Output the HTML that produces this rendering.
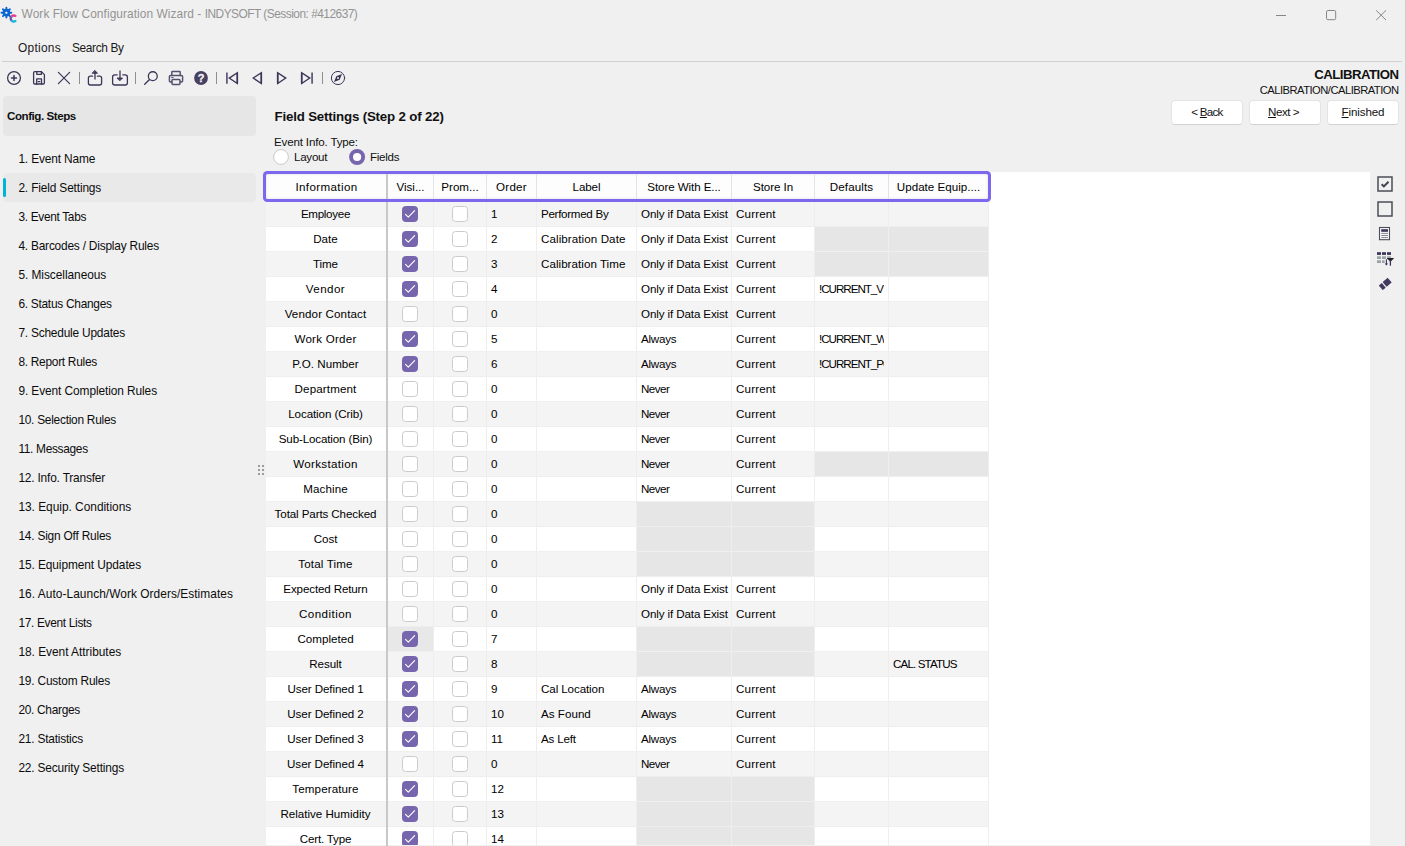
<!DOCTYPE html>
<html lang="en"><head><meta charset="utf-8"><title>Work Flow Configuration Wizard</title>
<style>
*{box-sizing:border-box;margin:0;padding:0}
html,body{width:1406px;height:846px;overflow:hidden;background:#f0f0f0}
body{position:relative;font-family:"Liberation Sans",sans-serif;font-size:11.6px;color:#111;}
div,span{position:absolute;white-space:nowrap}
.title{left:21.6px;top:6px;font-size:11.9px;color:#939393;line-height:16px;white-space:pre}
.ts{position:static;white-space:pre}
.menu{top:40px;font-size:11.9px;line-height:16px;color:#1a1a1a}
.sep{left:2px;top:61px;width:1400px;height:1px;background:#d0d0d0}
.redge{left:1405px;top:0;width:1px;height:846px;background:#cdcdcd}
.tsep{top:72px;width:1px;height:12px;background:#8f8f8f}
.cfg{left:3px;top:96px;width:253px;height:40px;background:#e6e6e6;border-radius:4px;font-weight:bold;font-size:11.6px;line-height:39px;padding-left:4px;color:#111;letter-spacing:-0.45px}
.sel{left:3px;top:173px;width:253px;height:29px;background:#e9e9e9;border-radius:4px}
.selbar{left:3px;top:178px;width:3px;height:19px;background:#00b4d8;border-radius:2px}
.step{left:18.4px;font-size:11.9px;line-height:20px;height:20px;color:#0c0c0c}
.ttl{left:274.5px;top:108px;font-weight:bold;font-size:13.3px;line-height:18px;letter-spacing:-0.18px}
.eit{left:274px;top:134px;font-size:11.6px;line-height:16px;letter-spacing:-0.17px}
.rl{top:149px;font-size:11.6px;line-height:16px;letter-spacing:-0.27px}
.panel{left:266px;top:172px;width:1104px;height:673px;background:#fff}
.row{left:266px;width:723px;height:25px;background:#fff;border-bottom:1px solid #f0f0f0}
.row.odd{background:#f4f4f4;border-bottom-color:#eee}
.c{top:-1px;height:25px;line-height:25px;font-size:11.6px;color:#000}
.info{left:0;width:119px;text-align:center}
.ord{left:225px}
.lab{left:275px}
.sw{left:375px}
.si{left:470px}
.df{left:553px;width:65px;overflow:hidden}
.up{left:627px}
.g{top:0;height:24px;background:#e6e6e6}
.cb{top:4px;width:16px;height:16px;border:1px solid #cbcbcb;border-radius:3.5px;background:#fff}
.cb.on{background:#7765ad;border-color:#7765ad}
.cb svg{position:absolute;left:-1px;top:-1px;width:16px;height:16px}
.focus{left:122px;top:0;width:45px;height:24px;background:#e8e8e8}
.vl{top:202px;width:1px;height:644px;background:#eeeeee}
.botline{left:266px;top:845px;width:1104px;height:1px;background:#f0f0f0}
.fz{left:386px;top:202px;width:2px;height:644px;background:#c8c8c8}
.hfz{left:120px;top:0;width:2px;height:25px;background:#c8c8c8}
.hdr{left:266px;top:174px;width:722px;height:25px;box-shadow:0 0 0 3px #7b68ee,inset 0 0 3px rgba(0,0,0,.13);border-radius:1.5px;background:#fdfdfd}
.h{top:0px;height:25px;line-height:25px;text-align:center;font-size:11.6px;color:#000}
.hl{top:0;width:1px;height:25px;background:#e4e4e4}
.btn{top:100px;height:24.5px;width:72px;background:#fff;border:1px solid #e4e4e4;border-bottom-color:#d2d2d2;border-radius:4px;text-align:center;line-height:21px;font-size:11.6px;color:#111}
.cal1{right:7.5px;top:67px;font-weight:bold;font-size:13.2px;line-height:16px;letter-spacing:-0.5px}
.cal2{right:7.5px;top:81.5px;font-size:11.2px;line-height:16px;letter-spacing:-0.52px}
u{text-decoration-thickness:1px;text-underline-offset:1px}
svg{position:absolute;overflow:visible}
</style></head>
<body>
<svg style="left:0;top:0" width="20" height="26" viewBox="0 0 20 26"><path d="M8.40 12.70L11.30 12.70M7.81 14.11L9.86 16.16M6.40 14.70L6.40 17.60M4.99 14.11L2.94 16.16M4.40 12.70L1.50 12.70M4.99 11.29L2.94 9.24M6.40 10.70L6.40 7.80M7.81 11.29L9.86 9.24" stroke="#0b66d2" stroke-width="1.9" stroke-linecap="round" fill="none"/><circle cx="6.4" cy="12.7" r="2.75" fill="none" stroke="#0b66d2" stroke-width="2.2"/><path d="M16.06 16.65A3 3 0 0 0 11.58 16.38" fill="none" stroke="#e2408f" stroke-width="2.3"/><path d="M11.58 16.38A3 3 0 0 0 11.58 20.62" fill="none" stroke="#6b4fa8" stroke-width="2.3"/><path d="M11.58 20.62A3 3 0 0 0 16.06 20.35" fill="none" stroke="#12b9dd" stroke-width="2.3"/></svg>
<div class="title"><span class="ts" style="letter-spacing:0.07px">Work Flow Configuration Wizard - </span><span class="ts" style="letter-spacing:-0.51px">INDYSOFT (Session: #412637)</span></div>
<svg style="left:1270px;top:4px" width="130" height="22" viewBox="0 0 130 22" fill="none" stroke="#868686" stroke-width="1"><path d="M6 11.5h10"/><rect x="56.5" y="6.5" width="9.2" height="9.2" rx="1.4"/><path d="M106.2 6.3l9.8 9.8M116 6.3l-9.8 9.8"/></svg>
<div class="menu" style="left:18px;letter-spacing:0.286px">Options</div><div class="menu" style="left:72px;letter-spacing:-0.37px">Search By</div>
<div class="sep"></div><div class="redge"></div>
<svg style="left:0;top:64px" width="360" height="28" viewBox="0 64 360 28" fill="none" stroke="#3d3557" stroke-width="1.3" stroke-linecap="round" stroke-linejoin="round">
<circle cx="14" cy="78" r="6.4"/><path d="M14 75.5v5M11.5 78h5" stroke-width="1.5"/>
<path d="M33.6 72.8a1.2 1.2 0 0 1 1.2-1.2h6.6l3 3v8.2a1.2 1.2 0 0 1-1.2 1.2h-8.4a1.2 1.2 0 0 1-1.2-1.2z"/><path d="M36.8 71.8v2.5h4.6v-2.5M36.7 84v-5.1h4.8V84"/><path d="M38.2 81.6h1.6" stroke-width="1.2"/>
<path d="M58.4 72.4l11.2 11.2M69.6 72.4L58.4 83.6" stroke-width="1.2"/>
<path d="M92.6 76.2h-2.2a2 2 0 0 0-2 2v4.8a2 2 0 0 0 2 2h9.2a2 2 0 0 0 2-2v-4.8a2 2 0 0 0-2-2h-2.2"/><path d="M95 79.4v-6.6" stroke-linecap="butt"/><path d="M95 70.6l2.5 2.7h-5z" fill="#3d3557" stroke-width=".9"/>
<path d="M117.2 74.8h-2.4a2.2 2.2 0 0 0-2.2 2.2v5.8a2.2 2.2 0 0 0 2.2 2.2h10.4a2.2 2.2 0 0 0 2.2-2.2v-5.8a2.2 2.2 0 0 0-2.2-2.2h-2.4"/><path d="M120 70.4v8" stroke-linecap="butt"/><path d="M120 80.6l2.6-2.6h-5.2z" fill="#3d3557" stroke-width=".9"/>
<circle cx="152.8" cy="76.2" r="4.45"/><path d="M149.2 79.8l-4.5 4.5" stroke-width="1.35"/>
<g stroke="#564e6f" stroke-width="1.45"><path d="M171.8 75.4v-3.2a.8.8 0 0 1 .8-.8h6.8a.8.8 0 0 1 .8.8v3.2"/><path d="M171.8 82h-1.2a1.2 1.2 0 0 1-1.2-1.2v-4.2a1.2 1.2 0 0 1 1.2-1.2h10.8a1.2 1.2 0 0 1 1.2 1.2v4.2a1.2 1.2 0 0 1-1.2 1.2h-1.2"/><rect x="172" y="79.4" width="8" height="5" rx=".8"/><path d="M171.6 77.6h1.6" stroke-width="1"/></g>
<circle cx="201" cy="78" r="6.9" fill="#484060" stroke="none"/>
<path d="M226.9 72.4v11.4M237.2 72.9v10.4M261.2 72.9v10.4M277.8 72.9v10.4M301.8 72.9v10.4M312.1 72.4v11.4" stroke="#635c7d" stroke-width="1.8" stroke-linecap="butt"/><path d="M237.4 72.6v11L229.2 78.1z" stroke-linejoin="miter"/>
<path d="M261.4 72.6v11L253.2 78.1z" stroke-linejoin="miter"/>
<path d="M277.6 72.6v11L285.8 78.1z" stroke-linejoin="miter"/>
<path d="M301.6 72.6v11L309.8 78.1z" stroke-linejoin="miter"/>
<circle cx="338" cy="78" r="6.6" stroke-width="1"/><path d="M342 74l-2.3 5.7-5.7 2.3 2.3-5.7z" fill="#3d3557" stroke="none"/><circle cx="338" cy="78" r="1" fill="#f0f0f0" stroke="none"/>
<text x="201" y="81.8" text-anchor="middle" font-family="Liberation Sans, sans-serif" font-weight="bold" font-size="11" fill="#f4f4f4" stroke="#f4f4f4" stroke-width=".3">?</text>
</svg>
<div class="tsep" style="left:79px"></div><div class="tsep" style="left:135px"></div><div class="tsep" style="left:216px"></div><div class="tsep" style="left:322px"></div>
<div class="cal1">CALIBRATION</div><div class="cal2">CALIBRATION/CALIBRATION</div>
<div class="btn" style="left:1171px;letter-spacing:-0.75px">&lt; <u>B</u>ack</div><div class="btn" style="left:1249px;letter-spacing:-0.5px;padding-right:3px"><u>N</u>ext &gt;</div><div class="btn" style="left:1327px;letter-spacing:-0.12px"><u>F</u>inished</div>
<div class="ttl">Field Settings (Step 2 of 22)</div>
<div class="eit">Event Info. Type:</div>
<svg style="left:272px;top:148px" width="100" height="18" viewBox="272 148 100 18"><circle cx="281" cy="157" r="7.4" fill="#fff" stroke="#cacaca" stroke-width="1"/><circle cx="357.1" cy="157" r="6.05" fill="#fff" stroke="#7765ad" stroke-width="3.9"/></svg>
<div class="rl" style="left:294px">Layout</div><div class="rl" style="left:370px">Fields</div>
<div class="cfg">Config. Steps</div>
<div class="sel"></div><div class="selbar"></div>
<div class="step" style="top:149px;letter-spacing:-0.138px;">1. Event Name</div>
<div class="step" style="top:178px;letter-spacing:-0.148px;">2. Field Settings</div>
<div class="step" style="top:207px;letter-spacing:-0.32px;">3. Event Tabs</div>
<div class="step" style="top:236px;letter-spacing:-0.206px;">4. Barcodes / Display Rules</div>
<div class="step" style="top:265px;letter-spacing:-0.045px;">5. Miscellaneous</div>
<div class="step" style="top:294px;letter-spacing:-0.265px;">6. Status Changes</div>
<div class="step" style="top:323px;letter-spacing:-0.206px;">7. Schedule Updates</div>
<div class="step" style="top:352px;letter-spacing:-0.273px;">8. Report Rules</div>
<div class="step" style="top:381px;letter-spacing:-0.087px;">9. Event Completion Rules</div>
<div class="step" style="top:410px;letter-spacing:-0.259px;">10. Selection Rules</div>
<div class="step" style="top:439px;letter-spacing:-0.314px;">11. Messages</div>
<div class="step" style="top:468px;letter-spacing:-0.182px;">12. Info. Transfer</div>
<div class="step" style="top:497px;letter-spacing:-0.012px;">13. Equip. Conditions</div>
<div class="step" style="top:526px;letter-spacing:-0.199px;">14. Sign Off Rules</div>
<div class="step" style="top:555px;letter-spacing:-0.079px;">15. Equipment Updates</div>
<div class="step" style="top:584px;letter-spacing:0.053px;">16. Auto-Launch/Work Orders/Estimates</div>
<div class="step" style="top:613px;letter-spacing:-0.314px;">17. Event Lists</div>
<div class="step" style="top:642px;letter-spacing:-0.017px;">18. Event Attributes</div>
<div class="step" style="top:671px;letter-spacing:-0.181px;">19. Custom Rules</div>
<div class="step" style="top:700px;letter-spacing:-0.288px;">20. Charges</div>
<div class="step" style="top:729px;letter-spacing:-0.202px;">21. Statistics</div>
<div class="step" style="top:758px;letter-spacing:-0.168px;">22. Security Settings</div>
<div class="panel"></div>
<div class="row odd" style="top:202px"><span class="c info" style="letter-spacing:-0.295px">Employee</span><span class="cb on" style="left:136px"><svg viewBox="0 0 16 16"><path d="M3.5 8.4 L6.3 11.1 L12.6 4.7" fill="none" stroke="#fff" stroke-width="1.15" stroke-linecap="round" stroke-linejoin="round"/></svg></span><span class="cb" style="left:186px"></span><span class="c ord">1</span><span class="c lab" style="letter-spacing:-0.29px">Performed By</span><span class="c sw" style="letter-spacing:-0.113px">Only if Data Exist</span><span class="c si" style="letter-spacing:0.155px">Current</span></div>
<div class="row" style="top:227px"><span class="c info">Date</span><span class="cb on" style="left:136px"><svg viewBox="0 0 16 16"><path d="M3.5 8.4 L6.3 11.1 L12.6 4.7" fill="none" stroke="#fff" stroke-width="1.15" stroke-linecap="round" stroke-linejoin="round"/></svg></span><span class="cb" style="left:186px"></span><span class="c ord">2</span><span class="c lab" style="letter-spacing:0.084px">Calibration Date</span><span class="c sw" style="letter-spacing:-0.113px">Only if Data Exist</span><span class="c si" style="letter-spacing:0.155px">Current</span><span class="g" style="left:549px;width:73px"></span><span class="g" style="left:623px;width:99px"></span></div>
<div class="row odd" style="top:252px"><span class="c info" style="letter-spacing:-0.115px">Time</span><span class="cb on" style="left:136px"><svg viewBox="0 0 16 16"><path d="M3.5 8.4 L6.3 11.1 L12.6 4.7" fill="none" stroke="#fff" stroke-width="1.15" stroke-linecap="round" stroke-linejoin="round"/></svg></span><span class="cb" style="left:186px"></span><span class="c ord">3</span><span class="c lab" style="letter-spacing:0.041px">Calibration Time</span><span class="c sw" style="letter-spacing:-0.113px">Only if Data Exist</span><span class="c si" style="letter-spacing:0.155px">Current</span><span class="g" style="left:549px;width:73px"></span><span class="g" style="left:623px;width:99px"></span></div>
<div class="row" style="top:277px"><span class="c info" style="letter-spacing:0.43px">Vendor</span><span class="cb on" style="left:136px"><svg viewBox="0 0 16 16"><path d="M3.5 8.4 L6.3 11.1 L12.6 4.7" fill="none" stroke="#fff" stroke-width="1.15" stroke-linecap="round" stroke-linejoin="round"/></svg></span><span class="cb" style="left:186px"></span><span class="c ord">4</span><span class="c sw" style="letter-spacing:-0.113px">Only if Data Exist</span><span class="c si" style="letter-spacing:0.155px">Current</span><span class="c df" style="letter-spacing:-1.01px">!CURRENT_V</span></div>
<div class="row odd" style="top:302px"><span class="c info" style="letter-spacing:0.129px">Vendor Contact</span><span class="cb" style="left:136px"></span><span class="cb" style="left:186px"></span><span class="c ord">0</span><span class="c sw" style="letter-spacing:-0.113px">Only if Data Exist</span><span class="c si" style="letter-spacing:0.155px">Current</span></div>
<div class="row" style="top:327px"><span class="c info" style="letter-spacing:0.244px">Work Order</span><span class="cb on" style="left:136px"><svg viewBox="0 0 16 16"><path d="M3.5 8.4 L6.3 11.1 L12.6 4.7" fill="none" stroke="#fff" stroke-width="1.15" stroke-linecap="round" stroke-linejoin="round"/></svg></span><span class="cb" style="left:186px"></span><span class="c ord">5</span><span class="c sw" style="letter-spacing:-0.247px">Always</span><span class="c si" style="letter-spacing:0.155px">Current</span><span class="c df" style="letter-spacing:-1.01px">!CURRENT_W</span></div>
<div class="row odd" style="top:352px"><span class="c info" style="letter-spacing:0.014px">P.O. Number</span><span class="cb on" style="left:136px"><svg viewBox="0 0 16 16"><path d="M3.5 8.4 L6.3 11.1 L12.6 4.7" fill="none" stroke="#fff" stroke-width="1.15" stroke-linecap="round" stroke-linejoin="round"/></svg></span><span class="cb" style="left:186px"></span><span class="c ord">6</span><span class="c sw" style="letter-spacing:-0.247px">Always</span><span class="c si" style="letter-spacing:0.155px">Current</span><span class="c df" style="letter-spacing:-1.01px">!CURRENT_PO</span></div>
<div class="row" style="top:377px"><span class="c info" style="letter-spacing:0.125px">Department</span><span class="cb" style="left:136px"></span><span class="cb" style="left:186px"></span><span class="c ord">0</span><span class="c sw" style="letter-spacing:-0.509px">Never</span><span class="c si" style="letter-spacing:0.155px">Current</span></div>
<div class="row odd" style="top:402px"><span class="c info" style="letter-spacing:-0.103px">Location (Crib)</span><span class="cb" style="left:136px"></span><span class="cb" style="left:186px"></span><span class="c ord">0</span><span class="c sw" style="letter-spacing:-0.509px">Never</span><span class="c si" style="letter-spacing:0.155px">Current</span></div>
<div class="row" style="top:427px"><span class="c info" style="letter-spacing:-0.137px">Sub-Location (Bin)</span><span class="cb" style="left:136px"></span><span class="cb" style="left:186px"></span><span class="c ord">0</span><span class="c sw" style="letter-spacing:-0.509px">Never</span><span class="c si" style="letter-spacing:0.155px">Current</span></div>
<div class="row odd" style="top:452px"><span class="c info" style="letter-spacing:0.34px">Workstation</span><span class="cb" style="left:136px"></span><span class="cb" style="left:186px"></span><span class="c ord">0</span><span class="c sw" style="letter-spacing:-0.509px">Never</span><span class="c si" style="letter-spacing:0.155px">Current</span><span class="g" style="left:549px;width:73px"></span><span class="g" style="left:623px;width:99px"></span></div>
<div class="row" style="top:477px"><span class="c info" style="letter-spacing:0.095px">Machine</span><span class="cb" style="left:136px"></span><span class="cb" style="left:186px"></span><span class="c ord">0</span><span class="c sw" style="letter-spacing:-0.509px">Never</span><span class="c si" style="letter-spacing:0.155px">Current</span></div>
<div class="row odd" style="top:502px"><span class="c info" style="letter-spacing:-0.103px">Total Parts Checked</span><span class="cb" style="left:136px"></span><span class="cb" style="left:186px"></span><span class="c ord">0</span><span class="g" style="left:371px;width:94px"></span><span class="g" style="left:466px;width:82px"></span></div>
<div class="row" style="top:527px"><span class="c info" style="letter-spacing:-0.048px">Cost</span><span class="cb" style="left:136px"></span><span class="cb" style="left:186px"></span><span class="c ord">0</span><span class="g" style="left:371px;width:94px"></span><span class="g" style="left:466px;width:82px"></span></div>
<div class="row odd" style="top:552px"><span class="c info" style="letter-spacing:0.162px">Total Time</span><span class="cb" style="left:136px"></span><span class="cb" style="left:186px"></span><span class="c ord">0</span><span class="g" style="left:371px;width:94px"></span><span class="g" style="left:466px;width:82px"></span></div>
<div class="row" style="top:577px"><span class="c info" style="letter-spacing:-0.14px">Expected Return</span><span class="cb" style="left:136px"></span><span class="cb" style="left:186px"></span><span class="c ord">0</span><span class="c sw" style="letter-spacing:-0.113px">Only if Data Exist</span><span class="c si" style="letter-spacing:0.155px">Current</span></div>
<div class="row odd" style="top:602px"><span class="c info" style="letter-spacing:0.45px">Condition</span><span class="cb" style="left:136px"></span><span class="cb" style="left:186px"></span><span class="c ord">0</span><span class="c sw" style="letter-spacing:-0.113px">Only if Data Exist</span><span class="c si" style="letter-spacing:0.155px">Current</span></div>
<div class="row" style="top:627px"><span class="c info" style="letter-spacing:0.015px">Completed</span><span class="focus"></span><span class="cb on" style="left:136px"><svg viewBox="0 0 16 16"><path d="M3.5 8.4 L6.3 11.1 L12.6 4.7" fill="none" stroke="#fff" stroke-width="1.15" stroke-linecap="round" stroke-linejoin="round"/></svg></span><span class="cb" style="left:186px"></span><span class="c ord">7</span><span class="g" style="left:371px;width:94px"></span><span class="g" style="left:466px;width:82px"></span></div>
<div class="row odd" style="top:652px"><span class="c info" style="letter-spacing:-0.075px">Result</span><span class="cb on" style="left:136px"><svg viewBox="0 0 16 16"><path d="M3.5 8.4 L6.3 11.1 L12.6 4.7" fill="none" stroke="#fff" stroke-width="1.15" stroke-linecap="round" stroke-linejoin="round"/></svg></span><span class="cb" style="left:186px"></span><span class="c ord">8</span><span class="g" style="left:371px;width:94px"></span><span class="g" style="left:466px;width:82px"></span><span class="c up" style="letter-spacing:-0.862px">CAL. STATUS</span></div>
<div class="row" style="top:677px"><span class="c info" style="letter-spacing:-0.088px">User Defined 1</span><span class="cb on" style="left:136px"><svg viewBox="0 0 16 16"><path d="M3.5 8.4 L6.3 11.1 L12.6 4.7" fill="none" stroke="#fff" stroke-width="1.15" stroke-linecap="round" stroke-linejoin="round"/></svg></span><span class="cb" style="left:186px"></span><span class="c ord">9</span><span class="c lab" style="letter-spacing:-0.096px">Cal Location</span><span class="c sw" style="letter-spacing:-0.247px">Always</span><span class="c si" style="letter-spacing:0.155px">Current</span></div>
<div class="row odd" style="top:702px"><span class="c info" style="letter-spacing:-0.057px">User Defined 2</span><span class="cb on" style="left:136px"><svg viewBox="0 0 16 16"><path d="M3.5 8.4 L6.3 11.1 L12.6 4.7" fill="none" stroke="#fff" stroke-width="1.15" stroke-linecap="round" stroke-linejoin="round"/></svg></span><span class="cb" style="left:186px"></span><span class="c ord">10</span><span class="c lab" style="letter-spacing:0.025px">As Found</span><span class="c sw" style="letter-spacing:-0.247px">Always</span><span class="c si" style="letter-spacing:0.155px">Current</span></div>
<div class="row" style="top:727px"><span class="c info" style="letter-spacing:-0.057px">User Defined 3</span><span class="cb on" style="left:136px"><svg viewBox="0 0 16 16"><path d="M3.5 8.4 L6.3 11.1 L12.6 4.7" fill="none" stroke="#fff" stroke-width="1.15" stroke-linecap="round" stroke-linejoin="round"/></svg></span><span class="cb" style="left:186px"></span><span class="c ord">11</span><span class="c lab" style="letter-spacing:-0.199px">As Left</span><span class="c sw" style="letter-spacing:-0.247px">Always</span><span class="c si" style="letter-spacing:0.155px">Current</span></div>
<div class="row odd" style="top:752px"><span class="c info" style="letter-spacing:-0.026px">User Defined 4</span><span class="cb" style="left:136px"></span><span class="cb" style="left:186px"></span><span class="c ord">0</span><span class="c sw" style="letter-spacing:-0.509px">Never</span><span class="c si" style="letter-spacing:0.155px">Current</span></div>
<div class="row" style="top:777px"><span class="c info" style="letter-spacing:0.111px">Temperature</span><span class="cb on" style="left:136px"><svg viewBox="0 0 16 16"><path d="M3.5 8.4 L6.3 11.1 L12.6 4.7" fill="none" stroke="#fff" stroke-width="1.15" stroke-linecap="round" stroke-linejoin="round"/></svg></span><span class="cb" style="left:186px"></span><span class="c ord">12</span><span class="g" style="left:371px;width:94px"></span><span class="g" style="left:466px;width:82px"></span></div>
<div class="row odd" style="top:802px"><span class="c info" style="letter-spacing:-0.006px">Relative Humidity</span><span class="cb on" style="left:136px"><svg viewBox="0 0 16 16"><path d="M3.5 8.4 L6.3 11.1 L12.6 4.7" fill="none" stroke="#fff" stroke-width="1.15" stroke-linecap="round" stroke-linejoin="round"/></svg></span><span class="cb" style="left:186px"></span><span class="c ord">13</span><span class="g" style="left:371px;width:94px"></span><span class="g" style="left:466px;width:82px"></span></div>
<div class="row" style="top:827px"><span class="c info" style="letter-spacing:-0.187px">Cert. Type</span><span class="cb on" style="left:136px"><svg viewBox="0 0 16 16"><path d="M3.5 8.4 L6.3 11.1 L12.6 4.7" fill="none" stroke="#fff" stroke-width="1.15" stroke-linecap="round" stroke-linejoin="round"/></svg></span><span class="cb" style="left:186px"></span><span class="c ord">14</span><span class="g" style="left:371px;width:94px"></span><span class="g" style="left:466px;width:82px"></span></div>
<div class="vl" style="left:433px"></div><div class="vl" style="left:486px"></div><div class="vl" style="left:536px"></div><div class="vl" style="left:636px"></div><div class="vl" style="left:731px"></div><div class="vl" style="left:814px"></div><div class="vl" style="left:888px"></div><div class="vl" style="left:988px"></div>
<div class="botline"></div>
<div class="hdr"><span class="h" style="left:0px;width:121px;letter-spacing:0.37px;">Information</span><span class="h" style="left:122px;width:45px;">Visi...</span><span class="h" style="left:168px;width:52px;">Prom...</span><span class="h" style="left:221px;width:49px;letter-spacing:0.24px;">Order</span><span class="h" style="left:271px;width:99px;letter-spacing:-0.119px;">Label</span><span class="h" style="left:371px;width:94px;letter-spacing:-0.096px;">Store With E...</span><span class="h" style="left:466px;width:82px;letter-spacing:-0.073px;">Store In</span><span class="h" style="left:549px;width:73px;letter-spacing:0.124px;">Defaults</span><span class="h" style="left:623px;width:99px;letter-spacing:0.01px;">Update Equip....</span><span class="hfz"></span><span class="hl" style="left:167px"></span><span class="hl" style="left:220px"></span><span class="hl" style="left:270px"></span><span class="hl" style="left:370px"></span><span class="hl" style="left:465px"></span><span class="hl" style="left:548px"></span><span class="hl" style="left:622px"></span></div>
<div class="fz"></div>
<svg style="left:1370px;top:170px" width="30" height="130" viewBox="1370 170 30 130" fill="none">
<rect x="1378" y="177" width="14" height="14" stroke="#4a4f57" stroke-width="1.5"/><path d="M1381.6 184.2l2.3 2.2 4.6-4.6" stroke="#3f444c" stroke-width="2"/>
<rect x="1378" y="202" width="14" height="14" stroke="#4a4f57" stroke-width="1.5"/>
<rect x="1379.5" y="227.5" width="10" height="12.2" fill="#fafafa" stroke="#4a4f57" stroke-width="1.1"/><rect x="1381.2" y="229.2" width="6.8" height="2.6" fill="#3d3557"/><path d="M1381.2 233.4h6.8M1381.2 235.5h6.8M1381.2 237.6h6.8" stroke="#5a6068" stroke-width=".75"/>
<g fill="#3d3557"><rect x="1377" y="252.2" width="4" height="2.7"/><rect x="1382" y="252.2" width="4" height="2.7"/><rect x="1387" y="252.2" width="4" height="2.7"/></g>
<g fill="#9ba1a6"><rect x="1377" y="256.3" width="4" height="2.7"/><rect x="1382" y="256.3" width="4" height="2.7"/><rect x="1377" y="260.3" width="4" height="2.7"/><rect x="1382" y="260.3" width="2.6" height="2.7"/><rect x="1387" y="256.3" width="4" height="1.6"/></g>
<path d="M1387 258h6.8v.6l-2.8 2.6h-1.2l-2.8-2.6z" fill="#1f1d26"/><path d="M1390.4 259.5v6.2" stroke="#3d3557" stroke-width="1.3"/>
<path d="M1386.4 259.2v5.6" stroke="#3d3557" stroke-width="1.1"/><path d="M1384.7 263.4l1.7 2.2 1.7-2.2z" fill="#3d3557"/>
<g transform="translate(1385.1 284.1) rotate(-41)" fill="#443a60"><rect x="-0.6" y="-3.05" width="6.7" height="6.1" rx=".5"/><rect x="-5.7" y="-3.05" width="3.9" height="6.1" rx=".5"/></g>
</svg>
<svg style="left:256px;top:463px" width="10" height="14" viewBox="256 463 10 14" fill="#9c9c9c"><rect x="258" y="465" width="2" height="2"/><rect x="262" y="465" width="2" height="2"/><rect x="258" y="469" width="2" height="2"/><rect x="262" y="469" width="2" height="2"/><rect x="258" y="473" width="2" height="2"/><rect x="262" y="473" width="2" height="2"/></svg>
</body></html>
